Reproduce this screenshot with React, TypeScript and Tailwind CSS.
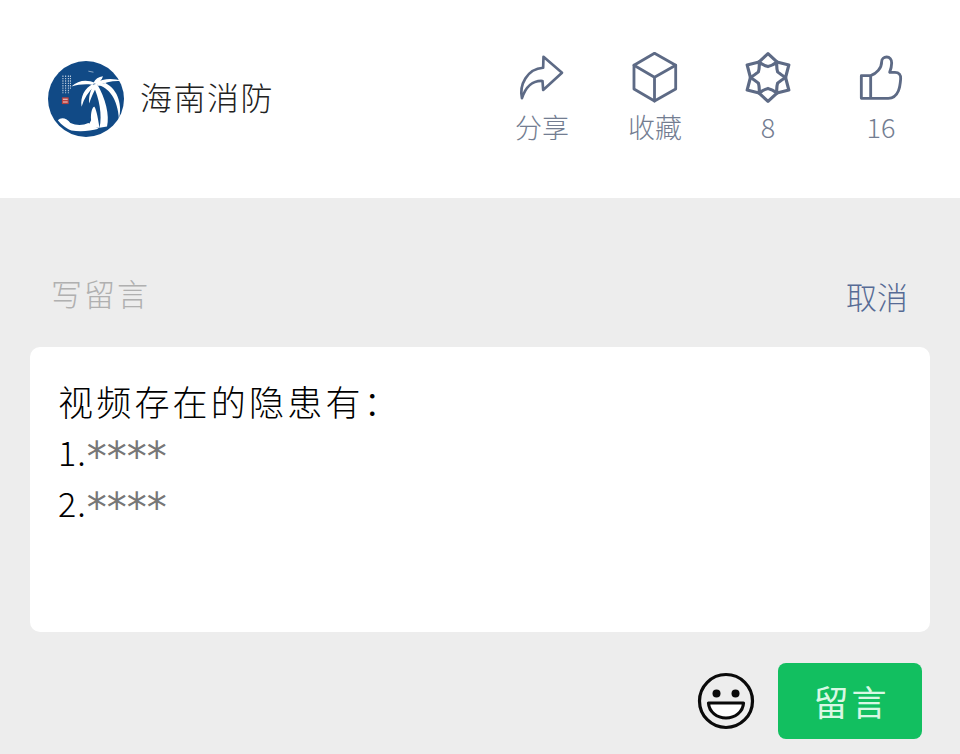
const FONT = "font-['Noto_Sans_CJK_SC','Noto_Sans',sans-serif]";
const STARS = "font-['DejaVu_Sans',sans-serif] font-normal text-[40px] leading-none tracking-[0px] text-[#777] align-[-5px]";

// icon paths are traced from the screenshot, so each viewBox keeps those coordinates
function ShareIcon() {
  return (
    <svg width="48" height="50" viewBox="55 35 145 150" fill="none" stroke="#5d6a85" strokeWidth="8" strokeLinejoin="round" strokeLinecap="round">
      <path d="M67 174C58 135 82 85 131 82L132 49L188 97L131 149L129 122C100 120 78 140 67 174Z" />
    </svg>
  );
}

function BoxIcon() {
  return (
    <svg width="48" height="54" viewBox="395 30 145 161" fill="none" stroke="#5d6a85" strokeWidth="8.500" strokeLinejoin="round" strokeLinecap="round">
      <path d="M466 39L530 75V147L466 183L404 147V75Z" />
      <path d="M404 75L466 111L530 75M466 111V183" />
    </svg>
  );
}

function StarIcon() {
  return (
    <svg width="48" height="53" viewBox="733 30 144 160" fill="none" stroke="#5d6a85" strokeWidth="9.500" strokeLinejoin="round">
      <path d="M805 38L832 63L868 72L858 110L868 148L832 157L805 182L778 157L742 148L752 110L742 72L778 63Z" />
      <path d="M778 63Q792 74 805 77Q818 74 832 63Q830 80 834 93Q845 102 858 110Q845 118 834 127Q830 140 832 157Q818 146 805 143Q792 146 778 157Q780 140 776 127Q765 118 752 110Q765 102 776 93Q780 80 778 63Z" />
    </svg>
  );
}

function ThumbIcon() {
  return (
    <svg width="48" height="47" viewBox="1075 35 142 141" fill="none" stroke="#5d6a85" strokeWidth="8.500" strokeLinejoin="round" strokeLinecap="round">
      <path d="M1115 100H1087V168H1115M1115 100V168M1115 100C1132 94 1148 78 1148 58C1148 49 1155 44 1163 44C1172 44 1178 52 1178 62C1178 72 1175 82 1172 90H1188C1200 90 1206 98 1205 110C1204 122 1203 135 1198 146C1192 160 1182 168 1168 168H1115" />
    </svg>
  );
}

function Logo() {
  return (
    <svg width="76" height="76" viewBox="56 65 224 224">
      <circle cx="168" cy="177" r="112" fill="#114a86" />
      <g fill="#fff">
        <path d="M208 262C216 225 208 175 188 135L200 132C226 175 238 225 230 258Z" />
        <path d="M195 130C170 118 145 122 125 140C145 135 165 132 185 135Z" />
        <path d="M188 133C165 145 150 170 155 200C162 175 175 155 192 140Z" />
        <path d="M192 135C180 150 175 175 178 190C185 165 195 150 200 138Z" />
        <path d="M190 130C195 118 205 112 218 110C215 120 208 128 198 133Z" />
        <path d="M195 130C220 115 250 115 275 125C250 122 225 128 205 138Z" />
        <path d="M200 136C235 140 262 180 265 235C275 200 265 150 225 130Z" />
        <path d="M183 240C181 215 188 198 193 200C200 212 204 240 208 262H172Z" />
        <path d="M85 240C95 228 112 234 122 248C140 256 160 255 175 248L205 265C180 272 150 274 125 270C105 262 95 252 85 240Z" />
      </g>
      <path d="M100 108V160M108 108V160M116 108V160M122 108V150" stroke="#c9d6e4" strokeWidth="3" strokeDasharray="4 3" />
      <rect x="97" y="172" width="20" height="20" fill="#b8413f" />
      <path d="M100 178H114M100 186H114" stroke="#f0d5d5" strokeWidth="3" />
      <path d="M175 95L190 98" stroke="#c9d6e4" strokeWidth="2" />
    </svg>
  );
}

function Smile() {
  return (
    <svg width="58" height="58" viewBox="0 0 58 58" fill="none">
      <circle cx="29" cy="29" r="26.500" stroke="#0a0a0a" strokeWidth="3.200" />
      <circle cx="19.500" cy="21.500" r="4" fill="#0a0a0a" />
      <circle cx="38.500" cy="21.500" r="4" fill="#0a0a0a" />
      <path d="M11.500 31H46.500C46 40 38 46 29 46C20 46 12 40 11.500 31Z" fill="#fff" stroke="#0a0a0a" strokeWidth="3.200" strokeLinejoin="round" />
    </svg>
  );
}

const ACTIONS = [
  { icon: <ShareIcon />, label: "分享" },
  { icon: <BoxIcon />, label: "收藏" },
  { icon: <StarIcon />, label: "8" },
  { icon: <ThumbIcon />, label: "16" },
];

export default function App() {
  return (
    <div className={`w-[960px] h-[754px] overflow-hidden bg-[#ededed] font-light ${FONT}`}>
      <header className="h-[198px] bg-white flex items-start justify-between pl-[48px] pr-[51px]">
        <div className="flex items-center gap-[16px] mt-[61px]">
          <Logo />
          <span className="text-[32px] leading-[44px] tracking-[1.500px] text-[#222] mb-[6px]">海南消防</span>
        </div>
        <div className="flex mt-[51px] gap-[57px] text-[#737d91]">
          {ACTIONS.map((a) => (
            <div key={a.label} className="w-[56px] flex flex-col items-center">
              <div className="h-[52px] flex items-center justify-center">{a.icon}</div>
              <span className="text-[27px] leading-[40px] mt-[4px] whitespace-nowrap">{a.label}</span>
            </div>
          ))}
        </div>
      </header>

      <div className="flex items-start justify-between pl-[51px] pr-[52px] pt-[73px] h-[149px]">
        <span className="text-[31px] leading-[44px] tracking-[2px] text-[#b0b0b0]">写留言</span>
        <span className="text-[31px] leading-[44px] text-[#576b95] mt-[3px]">取消</span>
      </div>

      <div className="ml-[30px] w-[900px] h-[285px] bg-white rounded-[10px] pl-[28px] pt-[28px] text-black">
        <p className="text-[35px] leading-[51px] tracking-[3.200px]">视频存在的隐患有：</p>
        <p className="text-[34px] leading-[51px] tracking-[1px] whitespace-nowrap">1.<span className={STARS}>****</span></p>
        <p className="text-[34px] leading-[51px] tracking-[1px] whitespace-nowrap">2.<span className={STARS}>****</span></p>
      </div>

      <div className="flex items-center justify-end gap-[23px] pr-[38px] mt-[31px]">
        <Smile />
        <button type="button" className="w-[144px] h-[76px] rounded-[8px] bg-[#12bf60] text-[#d8f8e4] font-normal text-[35px] tracking-[3px] pl-[3px]">留言</button>
      </div>
    </div>
  );
}
